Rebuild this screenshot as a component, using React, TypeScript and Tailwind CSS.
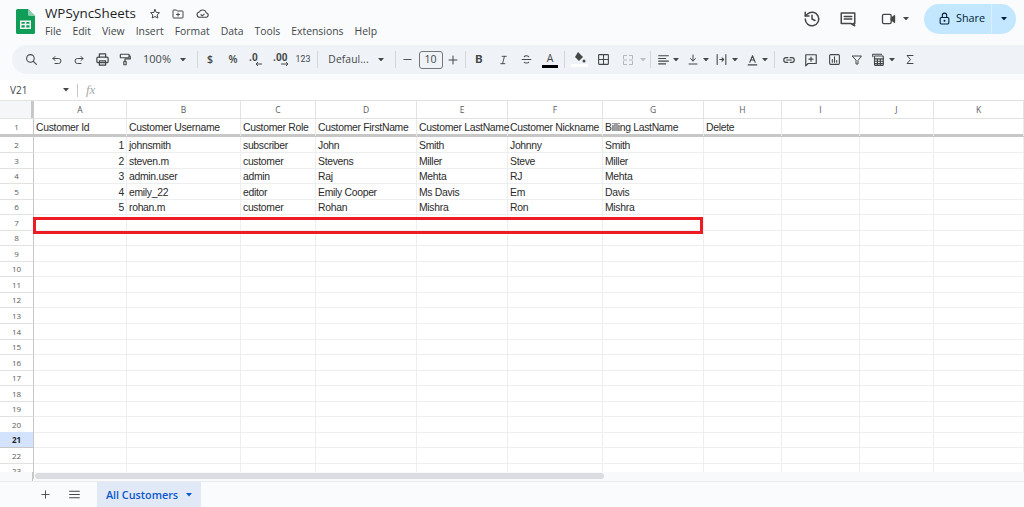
import React from "react";

const S = ({ w = 16, h = 16, children, sw = 2 }: { w?: number; h?: number; children: React.ReactNode; sw?: number }) => (
  <svg width={w} height={h} viewBox="0 0 24 24" fill="none" stroke="currentColor" strokeWidth={sw} strokeLinecap="round" strokeLinejoin="round">{children}</svg>
);
const Caret = ({ c = "#444746" }: { c?: string }) => (
  <svg width="6" height="3.500" viewBox="0 0 7 4"><path d="M0 0h7L3.500 4z" fill={c} /></svg>
);
const Sep = () => <div className="w-px h-[17px] bg-[#d4d7da]" />;

const Slot = ({ w, children, className = "" }: { w: number; children?: React.ReactNode; className?: string }) => (
  <div style={{ width: w }} className={"shrink-0 flex items-center justify-center h-full " + className}>{children}</div>
);

const uiText = "font-['Open_Sans',sans-serif]";

// Every toolbar control: centre x in the window, slot width, content.
const tools: [number, number, React.ReactNode][] = [
  [31, 16, <S w={13} h={13}><circle cx="10" cy="10" r="7" /><path d="M21 21l-6-6" /></S>],
  [57, 14, <S w={12} h={12}><path d="M8 5L4 9l4 4" /><path d="M4 9h11a5 5 0 0 1 0 10H8" /></S>],
  [79, 14, <S w={12} h={12}><path d="M16 5l4 4-4 4" /><path d="M20 9H9a5 5 0 0 0 0 10h7" /></S>],
  [102, 16, <S w={15} h={15}><path d="M7 8V3h10v5" /><rect x="3" y="8" width="18" height="9" rx="2" /><path d="M7 14h10v7H7z" /></S>],
  [125, 16, <S w={14} h={15}><rect x="4" y="3" width="15" height="6" rx="1" /><path d="M19 6h2v5h-9v4" /><rect x="10" y="15" width="4" height="6" rx="1" /></S>],
  [157, 30, <span className={"text-[11px] " + uiText}>100%</span>],
  [183, 8, <Caret />],
  [197, 1, <Sep />],
  [210, 12, <span className={"text-[10.500px] font-semibold " + uiText}>$</span>],
  [233, 12, <span className={"text-[10.500px] font-semibold " + uiText}>%</span>],
  [256, 16, <svg width="14" height="15" viewBox="0 0 14 15"><text x="0" y="9" fontSize="10" fontWeight="700" fontFamily="Roboto" fill="currentColor">.0</text><path d="M13 12H7M9 10l-2 2 2 2" stroke="currentColor" fill="none" /></svg>],
  [282, 20, <svg width="18" height="15" viewBox="0 0 18 15"><text x="0" y="9" fontSize="10" fontWeight="700" fontFamily="Roboto" fill="currentColor">.00</text><path d="M8 12h7M13 10l2 2-2 2" stroke="currentColor" fill="none" /></svg>],
  [303, 16, <span className="text-[8.800px]">123</span>],
  [317, 1, <Sep />],
  [348.5, 42, <span className={"text-[10.300px] tracking-[0.1px] " + uiText}>Defaul...</span>],
  [381, 8, <Caret />],
  [395, 1, <Sep />],
  [407, 12, <S w={11} h={11}><path d="M4 12h16" /></S>],
  [430.5, 24, <div className={"w-full h-[18px] border border-[#747775] rounded-[3px] flex items-center justify-center text-[10.500px] text-[#444746] " + uiText}>10</div>],
  [453, 12, <S w={12} h={12}><path d="M12 4v16M4 12h16" /></S>],
  [465, 1, <Sep />],
  [479, 12, <span className="text-[11.500px] font-bold">B</span>],
  [503, 12, <S w={11} h={12}><path d="M9 4h9M6 20h9M14 4l-4 16" /></S>],
  [526, 14, <S w={13} h={13}><path d="M4 12h16M16 7c-1-2-7-3-8 0M8 17c1 2 7 2 8 0" /></S>],
  [550, 16, <div className="flex flex-col items-center mt-[1px]"><span className={"text-[10.500px] leading-[11px] " + uiText}>A</span><div className="w-[16px] h-[3px] bg-black mt-[1px]" /></div>],
  [564.5, 1, <Sep />],
  [579, 17, <div className="flex flex-col items-center"><svg width="13" height="11" viewBox="0 0 13 11"><path d="M5 0l5 5-4 4-4-4z" fill="currentColor" /><circle cx="11" cy="9" r="1.500" fill="currentColor" /></svg><div className="w-[17px] h-[3px] bg-white mt-[1px]" /></div>],
  [603, 14, <S w={13} h={13}><rect x="3" y="3" width="18" height="18" rx="1" /><path d="M12 3v18M3 12h18" /></S>],
  [628, 13, <span className="text-[#b4b7b9]"><S w={12} h={12}><path d="M3 9V3h6M15 3h6v6M21 15v6h-6M9 21H3v-6M3 12h6M15 12h6" /></S></span>],
  [642.5, 8, <Caret c="#bcbfc1" />],
  [650, 1, <Sep />],
  [663.5, 14, <S w={13} h={13}><path d="M3 5h18M3 10h13M3 15h18M3 20h13" /></S>],
  [676, 8, <Caret />],
  [693, 14, <S w={12} h={13}><path d="M12 3v12M7 10l5 5 5-5M4 21h16" /></S>],
  [706, 8, <Caret />],
  [721.5, 14, <S w={13} h={13}><path d="M4 3v18M20 3v18M9 12h7M13 9l3 3-3 3" /></S>],
  [735, 8, <Caret />],
  [752, 14, <S w={13} h={14}><path d="M7 16L12 4l5 12M9 12h6M4 21h16" /></S>],
  [765, 8, <Caret />],
  [774, 1, <Sep />],
  [788.5, 14, <S w={14} h={14}><path d="M10 8H7a4 4 0 0 0 0 8h3M14 8h3a4 4 0 0 1 0 8h-3M8 12h8" /></S>],
  [811, 14, <S w={14} h={14}><path d="M3 3h18v15H7l-4 4z" /><path d="M12 7v7M8.500 10.500h7" /></S>],
  [834, 14, <S w={13} h={13}><rect x="3" y="3" width="18" height="18" rx="2" /><path d="M8 17v-5M12 17V7M16 17v-3" /></S>],
  [857, 14, <S w={12} h={12}><path d="M3 4h18l-7 9v7h-4v-7z" /></S>],
  [878, 14, <S w={14} h={15}><path d="M3 7V3h15" /><rect x="6" y="6" width="15" height="16" rx="1" /><path d="M6 11h15M6 15h15M6 19h15M11 11v11M16 11v11" /></S>],
  [892, 8, <Caret />],
  [910, 14, <S w={12} h={13}><path d="M18 4H6l7 8-7 8h12" /></S>],
];

const cols = ["A", "B", "C", "D", "E", "F", "G", "H", "I", "J", "K"];
const head = ["Customer Id", "Customer Username", "Customer Role", "Customer FirstName", "Customer LastName", "Customer Nickname", "Billing LastName", "Delete", "", "", ""];
const data = [
  ["1", "johnsmith", "subscriber", "John", "Smith", "Johnny", "Smith"],
  ["2", "steven.m", "customer", "Stevens", "Miller", "Steve", "Miller"],
  ["3", "admin.user", "admin", "Raj", "Mehta", "RJ", "Mehta"],
  ["4", "emily_22", "editor", "Emily Cooper", "Ms Davis", "Em", "Davis"],
  ["5", "rohan.m", "customer", "Rohan", "Mishra", "Ron", "Mishra"],
];
const gridCols = "grid grid-cols-[34px_93px_114px_75px_101px_91px_95px_101px_78px_78px_74px_90px]";
const rows = Array.from({ length: 22 }, (_, i) => i + 2);

function Toolbar() {
  let end = 12;
  return (
    <div className="h-[29px] shrink-0 ml-3 rounded-l-full bg-[#eff3f8] flex items-center text-[#444746] overflow-hidden">
      {tools.map(([c, w, node], i) => {
        const marginLeft = c - w / 2 - end;
        end = c + w / 2;
        return (
          <div key={i} style={{ marginLeft, width: w }} className="shrink-0 flex items-center justify-center">
            {node}
          </div>
        );
      })}
    </div>
  );
}

export default function App() {
  return (
    <div className="w-[1024px] h-[507px] overflow-hidden bg-[#f9fbfd] flex flex-col font-['Roboto',sans-serif] text-[#444746]">
      {/* title bar */}
      <header className="h-[45px] shrink-0 flex">
        <div className="w-[45px] shrink-0 pl-4 pt-[9px]">
          <svg width="19" height="25" viewBox="0 0 19 25">
            <path d="M1.500 0H12l7 7v16.500a1.500 1.500 0 0 1-1.500 1.500h-16A1.500 1.500 0 0 1 0 23.500v-22A1.500 1.500 0 0 1 1.500 0z" fill="#0f9d58" />
            <path d="M12 0l7 7h-5.500A1.500 1.500 0 0 1 12 5.500z" fill="#87ceac" />
            <path d="M4 11.500h11V20H4z M5.500 13v1.800h3.200V13z M10.300 13v1.800h3.200V13z M5.500 16.300v2.200h3.200v-2.200z M10.300 16.300v2.200h3.200v-2.200z" fill="#f1f1f1" fillRule="evenodd" />
          </svg>
        </div>
        <div className="flex flex-col">
          <div className="flex items-center h-[17px] mt-[5px]">
            <span className={"text-[13.400px] leading-[17px] text-[#1f1f1f] w-[104px] " + uiText}>WPSyncSheets</span>
            <div className="flex items-center gap-[10px]">
              <S w={12} h={12}><path d="M12 3l2.700 5.800 6.300.7-4.700 4.300 1.300 6.200L12 17l-5.600 3 1.300-6.200L3 9.500l6.300-.7z" /></S>
              <S w={14} h={12}><path d="M2 5a1 1 0 0 1 1-1h6l2 2h10a1 1 0 0 1 1 1v12a1 1 0 0 1-1 1H3a1 1 0 0 1-1-1z" /><path d="M12 10v6M9 13h6" /></S>
              <S w={15} h={13}><path d="M7 19a5 5 0 0 1-1-9.900 7 7 0 0 1 13 1.900 4 4 0 0 1-1 8z" /><path d="M9 14l2.500 2.500L15 13" /></S>
            </div>
          </div>
          <nav className={"flex items-center h-[16px] mt-[2px] gap-[11px] text-[10.400px] " + uiText}>
            {["File", "Edit", "View", "Insert", "Format", "Data", "Tools", "Extensions", "Help"].map((m) => <span key={m}>{m}</span>)}
          </nav>
        </div>
        <div className="ml-auto flex items-center h-[37px] mr-2">
          <S w={18} h={18}><path d="M3 12a9 9 0 1 0 3-6.700L3 8" /><path d="M3 3v5h5" /><path d="M12 7v5l4 2" /></S>
          <div className="ml-[18px]">
            <S w={18} h={18}><path d="M3 4h18v14h-2l2 3-5-3H3z" /><path d="M7 8.500h10M7 12h10" /></S>
          </div>
          <div className="flex items-center ml-[23px] gap-[6px]">
            <S w={17} h={16}><path d="M3 7a2 2 0 0 1 2-2h9a2 2 0 0 1 2 2v10a2 2 0 0 1-2 2H5a2 2 0 0 1-2-2z" /><path d="M16 11l5-4v10l-5-4" fill="currentColor" /></S>
            <Caret />
          </div>
          <div className="ml-[15px] w-[92px] h-[30px] rounded-full bg-[#c2e7ff] flex items-center text-[#001d35]">
            <div className="w-[66px] flex items-center pl-[14px] gap-[5px]">
              <S w={13} h={15}><rect x="4" y="10" width="16" height="12" rx="2" /><path d="M8 10V6a4 4 0 0 1 8 0v4" /><circle cx="12" cy="16" r="0.800" fill="currentColor" /></S>
              <span className={"text-[10.800px] " + uiText}>Share</span>
            </div>
            <div className="w-px h-full bg-[#d6eeff] ml-[1px]" />
            <div className="flex-1 flex justify-center"><Caret c="#001d35" /></div>
          </div>
        </div>
      </header>

      <Toolbar />

      {/* formula bar */}
      <div className="mt-[6px] h-[21px] bg-white border-b border-[#e1e3e1] flex items-center shrink-0">
        <div className={"w-[77px] pl-[10px] flex items-center justify-between text-[10px] pr-[8px] " + uiText}>V21<Caret /></div>
        <div className="w-px h-[13px] bg-[#c7c7c7]" />
        <span className="ml-[8px] italic text-[13px] font-['Liberation_Serif',serif] text-[#a8abad]">fx</span>
      </div>

      {/* sheet */}
      <div className="flex-1 min-h-0 bg-white relative overflow-hidden font-['Liberation_Sans',sans-serif] text-[10.400px] tracking-[-0.3px] text-[#2b2b2b]">
        <div className={gridCols + " h-[18px] border-b border-[#e1e3e1] tracking-normal"}>
          <div className="bg-[#f5f6f7] border-r-[3px] border-[#c7c7c7]" />
          {cols.map((c) => <div key={c} className={"border-r border-[#e1e3e1] text-center text-[8.500px] leading-[17px] text-[#575a5c] " + uiText}>{c}</div>)}
        </div>
        <div className={gridCols + " h-[18px] border-b-[3px] border-[#c7c7c7]"}>
          <div className={"border-r border-[#c7c7c7] text-center text-[8px] leading-[15px] tracking-normal text-[#575a5c] " + uiText}>1</div>
          {head.map((h, i) => <div key={i} className="border-r border-[#e8eaed] px-[2px] leading-[17px] whitespace-nowrap">{h}</div>)}
        </div>
        {rows.map((r) => {
          const d = data[r - 2];
          return (
            <div key={r} className={gridCols + " h-[15.550px]"}>
              <div className={"border-r border-b text-center text-[8px] leading-[15px] tracking-normal " + uiText + " " + (r === 21 ? "bg-[#d3e3fd] border-[#c7c7c7] font-bold text-[#1f1f1f]" : "border-r-[#c7c7c7] border-b-[#e1e3e1] text-[#575a5c]")}>{r}</div>
              {cols.map((_, i) => (
                <div key={i} className={"border-r border-b border-[#eceef0] px-[2px] leading-[17px] whitespace-nowrap overflow-hidden " + (i === 0 ? "text-right" : "")}>{d ? d[i] : ""}</div>
              ))}
            </div>
          );
        })}
        {/* highlighted row */}
        <div className="absolute left-[33px] top-[116px] w-[670px] h-[17px] border-[3px] border-[#ed1c24]" />
        {/* scrollbar */}
        <div className="absolute left-[34px] right-0 bottom-0 h-[9px] bg-[#f8f9fa]" />
        <div className="absolute left-0 w-[33px] bottom-0 h-[9px] bg-[#f8f9fa] border-r border-[#c7c7c7]" />
        <div className="absolute left-[35px] bottom-[2px] w-[569px] h-[6px] rounded-full bg-[#dadce0]" />
      </div>

      {/* tabs */}
      <div className="h-[26px] shrink-0 border-t border-[#e8eaed] flex items-stretch">
        <div className="w-[32px]" />
        <Slot w={26}><S w={11} h={11}><path d="M12 4v16M4 12h16" /></S></Slot>
        <Slot w={32}><S w={13} h={13}><path d="M3 6h18M3 12h18M3 18h18" /></S></Slot>
        <div className="w-[7px]" />
        <div className={"w-[104px] bg-[#e1e9f7] flex items-center justify-center gap-[8px] pt-[1px] text-[#0b57d0] text-[10.800px] font-semibold " + uiText}>
          All Customers <Caret c="#0b57d0" />
        </div>
      </div>
    </div>
  );
}
